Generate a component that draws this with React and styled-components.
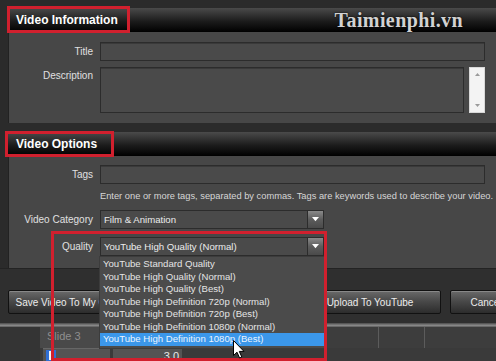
import React from "react";
import styled, { createGlobalStyle } from "styled-components";

const GlobalStyle = createGlobalStyle`
  html, body {
    margin: 0;
    padding: 0;
    background: #2b2b2b;
  }
  body {
    font-family: "Liberation Sans", Arial, sans-serif;
  }
`;

const Screen = styled.div`
  position: relative;
  width: 496px;
  height: 361px;
  overflow: hidden;
  box-sizing: border-box;
  padding-top: 8px;
  background: #2b2b2b;
  font-size: 10px;
  color: #e2e2e2;
`;

const Section = styled.section`
  margin-left: 8px;
  margin-bottom: ${(p) => p.$gap || 0}px;
`;

const Header = styled.div`
  height: 24px;
  display: flex;
  align-items: center;
  padding-left: 8px;
  background: linear-gradient(#4a4a4a, #1c1c1c 55%, #000);
  color: #fff;
  font-size: 12px;
  font-weight: bold;
`;

const Watermark = styled.span`
  margin-left: auto;
  margin-right: 33px;
  font-family: "Liberation Serif", "Times New Roman", serif;
  font-size: 20px;
  font-weight: bold;
  letter-spacing: 0.4px;
  color: #d2d2d2;
  text-shadow: 0 0 2px #000;
`;

const Body = styled.div`
  background: #474747;
  border-left: 1px solid #222;
  padding: ${(p) => p.$pad};
`;

const Row = styled.div`
  display: grid;
  grid-template-columns: 84px 1fr;
  column-gap: 7px;
  margin-top: ${(p) => p.$top || 0}px;
  padding-right: 11px;
`;

const Label = styled.label`
  text-align: right;
  line-height: ${(p) => p.$lh || 19}px;
  color: #e0e0e0;
`;

const Field = styled.div`
  box-sizing: border-box;
  height: ${(p) => p.$h || 19}px;
  background: #4a4a4a;
  border: 1px solid #2c2c2c;
  box-shadow: inset 0 1px 0 #3a3a3a;
`;

const AreaWrap = styled.div`
  display: flex;
  gap: 5px;
`;

const Scrollbar = styled.div`
  width: 16px;
  height: 46px;
  box-sizing: border-box;
  background: #f3f3f3;
  border: 1px solid #d8d8d8;
  display: flex;
  flex-direction: column;
  justify-content: space-between;
  align-items: center;
  padding: 5px 0;
  svg {
    display: block;
  }
`;

const Help = styled.div`
  grid-column: 2;
  line-height: 13px;
  font-size: 9.3px;
  color: #d6d6d6;
  white-space: nowrap;
`;

const SelectWrap = styled.div`
  position: relative;
  width: 224px;
  height: 19px;
  display: flex;
  font-size: 9.6px;
`;

const SelectBox = styled.div`
  flex: 1;
  box-sizing: border-box;
  background: #4a4a4a;
  border: 1px solid #2c2c2c;
  padding-left: 3px;
  line-height: 17px;
  color: #ececec;
  white-space: nowrap;
`;

const ArrowButton = styled.div`
  width: 16px;
  box-sizing: border-box;
  border: 1px solid #2c2c2c;
  border-left: none;
  background: linear-gradient(#8a8a8a, #5c5c5c 50%, #4a4a4a);
  display: flex;
  align-items: center;
  justify-content: center;
`;

const List = styled.ul`
  position: absolute;
  top: 20px;
  left: 0;
  right: 0;
  z-index: 5;
  margin: 0;
  padding: 1px 0 2px;
  list-style: none;
  background: #4b4b4b;
  box-shadow: 0 0 0 1px #3c3c3c;
`;

const Option = styled.li`
  height: 12.5px;
  line-height: 12.5px;
  padding-left: 3px;
  white-space: nowrap;
  color: ${(p) => (p.$active ? "#eaf4ff" : "#e4e4e4")};
  background: ${(p) => (p.$active ? "#3b97ea" : "transparent")};
`;

const ButtonBar = styled.div`
  display: flex;
  padding: 21px 0 9px 8px;
  background: #2f2f2f;
  border-top: 1px solid #232323;
  box-sizing: border-box;
  height: 55px;
`;

const Button = styled.div`
  flex: none;
  width: ${(p) => p.$w}px;
  margin-left: ${(p) => p.$ml || 0}px;
  height: 24px;
  box-sizing: border-box;
  border: 1px solid #111;
  border-radius: 2px;
  background: linear-gradient(#6a6a6a, #4a4a4a 45%, #2c2c2c);
  box-shadow: inset 0 1px 0 #888;
  color: #ececec;
  display: flex;
  align-items: center;
  justify-content: center;
  white-space: nowrap;
  overflow: hidden;
`;

const Divider = styled.div`
  height: 4px;
  background: linear-gradient(#4a4a4a, #8a8a8a 60%, #5a5a5a);
`;

const Timeline = styled.div`
  display: flex;
  height: 35px;
`;

const Gutter = styled.div`
  width: 40px;
  background: #343434;
`;

const Tracks = styled.div`
  flex: 1;
  display: flex;
  flex-direction: column;
`;

const TrackHead = styled.div`
  height: 21px;
  display: flex;
`;

const SlideName = styled.div`
  width: 73px;
  box-sizing: border-box;
  padding-left: 7px;
  line-height: 18px;
  background: #494949;
  color: #8e8e8e;
  font-size: 11px;
`;

const Ruler = styled.div`
  flex: 1;
  background-color: #3d3d3d;
  background-image: linear-gradient(90deg, transparent 265px, #5c5c5c 265px, #5c5c5c 266px, transparent 266px),
    linear-gradient(90deg, transparent 311px, #5c5c5c 311px, #5c5c5c 312px, transparent 312px);
`;

const CellRow = styled.div`
  flex: 1;
  display: flex;
  gap: 3px;
  padding-left: 3px;
  background: #3a3a3a;
`;

const Cell = styled.div`
  width: ${(p) => p.$w}px;
  box-sizing: border-box;
  background: #545454;
  border-top: 1px solid #666;
  display: flex;
  align-items: center;
  justify-content: ${(p) => (p.$right ? "flex-end" : "flex-start")};
  padding: 0 3px;
  color: #e8e8e8;
  font-size: 11px;
`;

const Highlight = styled.div`
  position: absolute;
  left: ${(p) => p.$x}px;
  top: ${(p) => p.$y}px;
  width: ${(p) => p.$w}px;
  height: ${(p) => p.$h}px;
  box-sizing: border-box;
  border: 3px solid #d1202e;
  pointer-events: none;
  z-index: 8;
`;

const Cursor = styled.svg`
  position: absolute;
  left: 233px;
  top: 340px;
  z-index: 9;
`;

const Down = ({ color = "#fff", size = 7 }) => (
  <svg width={size} height={size * 0.6} viewBox="0 0 10 6">
    <path d="M0 0 H10 L5 6 Z" fill={color} />
  </svg>
);

const Up = ({ color = "#9a9a9a" }) => (
  <svg width="5" height="3" viewBox="0 0 10 6">
    <path d="M0 6 H10 L5 0 Z" fill={color} />
  </svg>
);

const qualities = [
  "YouTube Standard Quality",
  "YouTube High Quality (Normal)",
  "YouTube High Quality (Best)",
  "YouTube High Definition 720p (Normal)",
  "YouTube High Definition 720p (Best)",
  "YouTube High Definition 1080p (Normal)",
  "YouTube High Definition 1080p (Best)",
];

export default function App() {
  return (
    <Screen>
      <GlobalStyle />

      <Section $gap={9}>
        <Header>
          Video Information
          <Watermark>Taimienphi.vn</Watermark>
        </Header>
        <Body $pad="10px 0 10px">
          <Row>
            <Label>Title</Label>
            <Field />
          </Row>
          <Row $top={6}>
            <Label $lh={18}>Description</Label>
            <AreaWrap>
              <Field $h={46} style={{ flex: 1 }} />
              <Scrollbar>
                <Up />
                <Down color="#9a9a9a" size={5} />
              </Scrollbar>
            </AreaWrap>
          </Row>
        </Body>
      </Section>

      <Section>
        <Header>Video Options</Header>
        <Body $pad="9px 0 12px">
          <Row>
            <Label>Tags</Label>
            <Field />
          </Row>
          <Row $top={6}>
            <Help>
              Enter one or more tags, separated by commas. Tags are keywords used to describe your video.
            </Help>
          </Row>
          <Row $top={7}>
            <Label>Video Category</Label>
            <SelectWrap>
              <SelectBox>Film &amp; Animation</SelectBox>
              <ArrowButton>
                <Down />
              </ArrowButton>
            </SelectWrap>
          </Row>
          <Row $top={8}>
            <Label>Quality</Label>
            <SelectWrap>
              <SelectBox>YouTube High Quality (Normal)</SelectBox>
              <ArrowButton>
                <Down />
              </ArrowButton>
              <List>
                {qualities.map((q, i) => (
                  <Option key={q} $active={i === qualities.length - 1}>
                    {q}
                  </Option>
                ))}
              </List>
            </SelectWrap>
          </Row>
        </Body>
      </Section>

      <ButtonBar>
        <Button $w={142}>Save Video To My Computer</Button>
        <Button $w={142} $ml={149}>Upload To YouTube</Button>
        <Button $w={72} $ml={9}>Cancel</Button>
      </ButtonBar>
      <Divider />

      <Timeline>
        <Gutter />
        <Tracks>
          <TrackHead>
            <SlideName>Slide 3</SlideName>
            <Ruler />
          </TrackHead>
          <CellRow>
            <Cell $w={67}>
              <svg width="10" height="11" viewBox="0 0 10 11">
                <rect x="0" y="0" width="10" height="11" fill="#2f6fd6" />
                <rect x="3" y="1" width="4" height="9" fill="#f4f4f4" />
              </svg>
            </Cell>
            <Cell $w={69} $right>
              3.0
            </Cell>
          </CellRow>
        </Tracks>
      </Timeline>

      <Highlight $x={7} $y={6} $w={123} $h={27} />
      <Highlight $x={5} $y={131} $w={109} $h={26} />
      <Highlight $x={51} $y={231} $w={276} $h={130} />

      <Cursor width="12" height="19" viewBox="0 0 12 19">
        <path
          d="M0.5 0.5 L0.5 15.5 L4 12.2 L6.6 18 L8.8 17 L6.3 11.4 L11 11.4 Z"
          fill="#fff"
          stroke="#000"
          strokeWidth="1"
          strokeLinejoin="round"
        />
      </Cursor>
    </Screen>
  );
}
